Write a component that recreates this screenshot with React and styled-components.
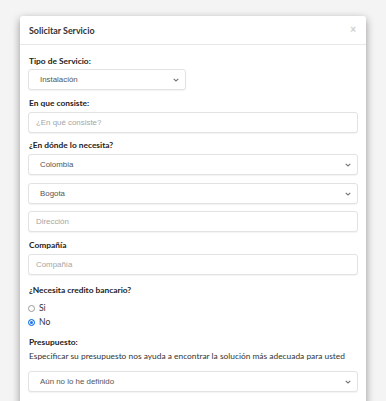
import React from "react";
import styled, { createGlobalStyle } from "styled-components";

const Global = createGlobalStyle`
  html, body { margin: 0; padding: 0; background: #f4f4f4; overflow: hidden; }
  * { box-sizing: border-box; }
`;

const Page = styled.div`
  padding: 16px 20px 0 20px;
  height: 401px;
  overflow: hidden;
`;

const Modal = styled.div`
  width: 346px;
  background: #fff;
  border-radius: 3px 3px 0 0;
  box-shadow: 0 3px 9px rgba(0, 0, 0, 0.4);
  height: 420px;
`;

const Header = styled.div`
  height: 29px;
  display: flex;
  align-items: center;
  justify-content: space-between;
  padding: 1px 10px 0 9px;
  border-bottom: 1px solid #e8e8e8;
`;

const Title = styled.div`
  font-family: Lato, "Liberation Sans", sans-serif;
  font-weight: 700;
  font-size: 8.9px;
  color: #333;
`;

const Close = styled.span`
  font-family: "Liberation Sans", sans-serif;
  font-size: 10px;
  color: #cfcfcf;
  font-weight: 700;
  margin-top: -3px;
`;

const Body = styled.div`
  padding: 11px 8px 0 8px;
  display: flex;
  flex-direction: column;
`;

const Group = styled.div`
  display: flex;
  flex-direction: column;
  margin-bottom: ${(p) => p.$mb ?? 8}px;
`;

const Label = styled.div`
  font-family: Lato, "Liberation Sans", sans-serif;
  font-weight: 700;
  font-size: 8.4px;
  line-height: 11px;
  color: #222;
  margin-bottom: ${(p) => p.$mb ?? 2}px;
  padding-left: 1px;
`;

const Help = styled.div`
  font-family: Lato, "Liberation Sans", sans-serif;
  font-size: 8.4px;
  line-height: 11px;
  color: #333;
  padding-left: 1px;
  margin-bottom: 9px;
`;

const Field = styled.div`
  width: ${(p) => p.$w || "100%"};
  height: 21px;
  border: 1px solid #e2e2e2;
  border-radius: 3px;
  background: #fff;
  box-shadow: 0 1px 1px rgba(0, 0, 0, 0.05);
  display: flex;
  align-items: center;
  justify-content: space-between;
  padding: 0 6px 0 ${(p) => (p.$select ? 11 : 7)}px;
  font-family: "Liberation Sans", Arial, sans-serif;
  font-size: 7.9px;
  color: ${(p) => (p.$placeholder ? "#a5a5a5" : "#555")};
  margin-bottom: ${(p) => p.$mb ?? 0}px;
`;

const Chevron = () => (
  <svg width="6" height="4" viewBox="0 0 6 4">
    <path d="M0.7 0.8 L3 3 L5.3 0.8" fill="none" stroke="#777" strokeWidth="1.1" />
  </svg>
);

const Select = ({ children, ...rest }) => (
  <Field $select {...rest}>
    <span>{children}</span>
    <Chevron />
  </Field>
);

const RadioRow = styled.div`
  display: flex;
  align-items: center;
  height: 14px;
  font-family: Lato, "Liberation Sans", sans-serif;
  font-size: 8.6px;
  color: #333;
  gap: 4px;
`;

const Dot = styled.span`
  width: 7px;
  height: 7px;
  border-radius: 50%;
  border: 1px solid ${(p) => (p.$on ? "#1a73e8" : "#9a9a9a")};
  background: ${(p) => (p.$on ? "#1a73e8" : "#fff")};
  box-shadow: ${(p) => (p.$on ? "inset 0 0 0 1px #fff" : "none")};
`;

export default function App() {
  return (
    <>
      <Global />
      <Page>
        <Modal>
          <Header>
            <Title>Solicitar Servicio</Title>
            <Close>×</Close>
          </Header>
          <Body>
            <Group>
              <Label>Tipo de Servicio:</Label>
              <Select $w="158px">Instalación</Select>
            </Group>
            <Group $mb={7}>
              <Label $mb={3}>En que consiste:</Label>
              <Field $placeholder>¿En qué consiste?</Field>
            </Group>
            <Group>
              <Label $mb={3}>¿En dónde lo necesita?</Label>
              <Select $mb={8}>Colombia</Select>
              <Select $mb={7}>Bogota</Select>
              <Field $placeholder>Dirección</Field>
            </Group>
            <Group $mb={10}>
              <Label $mb={3}>Compañía</Label>
              <Field $placeholder>Compañía</Field>
            </Group>
            <Group $mb={8}>
              <Label $mb={5}>¿Necesita credito bancario?</Label>
              <RadioRow>
                <Dot />
                Si
              </RadioRow>
              <RadioRow>
                <Dot $on />
                No
              </RadioRow>
            </Group>
            <Group>
              <Label $mb={3}>Presupuesto:</Label>
              <Help>Especificar su presupuesto nos ayuda a encontrar la solución más adecuada para usted</Help>
              <Select>Aún no lo he definido</Select>
            </Group>
          </Body>
        </Modal>
      </Page>
    </>
  );
}
